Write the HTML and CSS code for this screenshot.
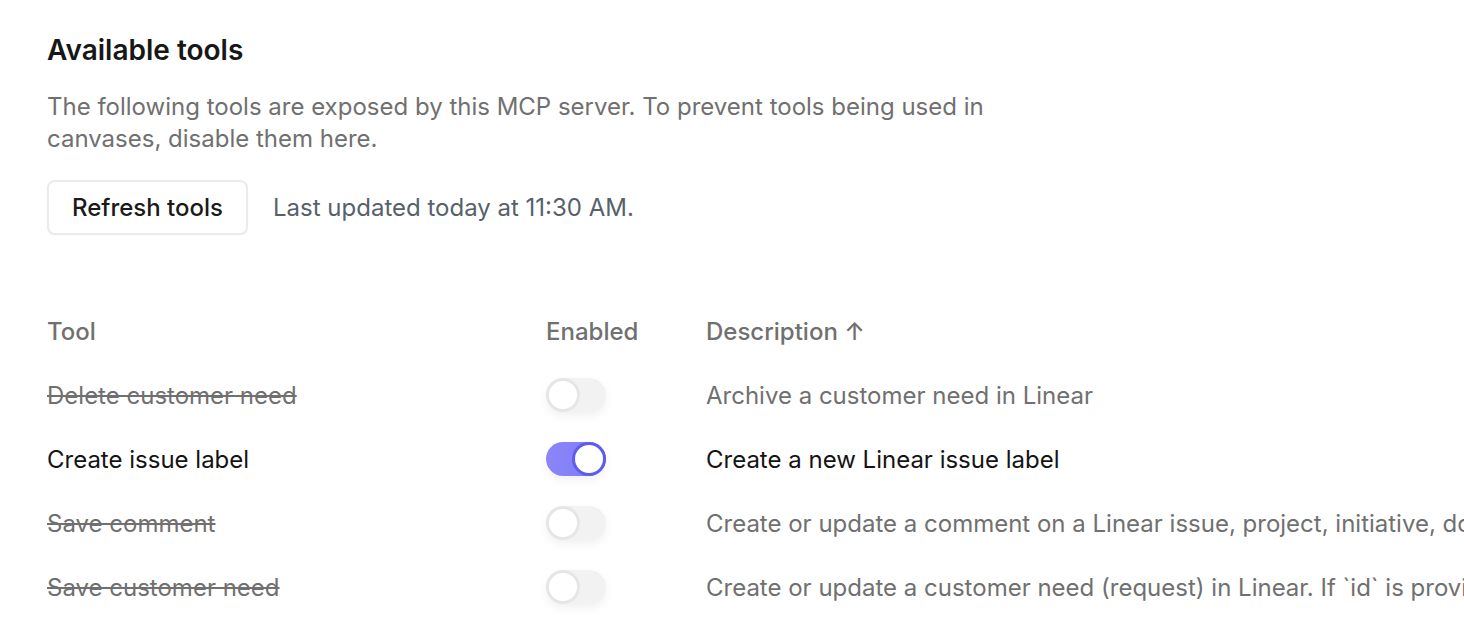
FILE: index.html
```html
<!DOCTYPE html>
<html>
<head>
<meta charset="utf-8">
<link rel="stylesheet" href="styles.css">
</head>
<body>
<main class="page">
  <h1 class="title">Available tools</h1>
  <p class="lead">The following tools are exposed by this MCP server. To prevent tools being used in canvases, disable them here.</p>
  <div class="refresh-row">
    <button class="btn">Refresh tools</button>
    <span class="updated">Last updated today at 11:30 AM.</span>
  </div>
  <div class="table">
    <div class="row head">
      <div class="c-tool">Tool</div>
      <div class="c-en">Enabled</div>
      <div class="c-desc">Description ↑</div>
    </div>
    <div class="row off">
      <div class="c-tool"><span class="name">Delete customer need</span></div>
      <div class="c-en"><span class="toggle"><span class="knob"></span></span></div>
      <div class="c-desc">Archive a customer need in Linear</div>
    </div>
    <div class="row on">
      <div class="c-tool"><span class="name">Create issue label</span></div>
      <div class="c-en"><span class="toggle"><span class="knob"></span></span></div>
      <div class="c-desc">Create a new Linear issue label</div>
    </div>
    <div class="row off">
      <div class="c-tool"><span class="name">Save comment</span></div>
      <div class="c-en"><span class="toggle"><span class="knob"></span></span></div>
      <div class="c-desc">Create or update a comment on a Linear issue, project, initiative, document, or customer need</div>
    </div>
    <div class="row off">
      <div class="c-tool"><span class="name">Save customer need</span></div>
      <div class="c-en"><span class="toggle"><span class="knob"></span></span></div>
      <div class="c-desc">Create or update a customer need (request) in Linear. If `id` is provided, updates the existing need</div>
    </div>
  </div>
</main>
</body>
</html>
```
FILE: styles.css
```css
html, body {
  margin: 0;
  padding: 0;
  background: #ffffff;
  overflow: hidden;
}
body {
  font-family: Inter, "Noto Sans", sans-serif;
  color: #1a1a1a;
  width: 1464px;
  height: 624px;
}
.page {
  padding: 34px 0 0 47px;
}
.title {
  margin: 0;
  font-size: 28px;
  font-weight: 600;
  line-height: 32px;
  color: #171717;
}
.lead {
  margin: 25px 0 0;
  width: 1000px;
  font-size: 24px;
  line-height: 32px;
  color: #707070;
}
.refresh-row {
  display: flex;
  align-items: center;
  gap: 25px;
  margin-top: 25px;
}
.btn {
  font-family: inherit;
  font-size: 24px;
  font-weight: 500;
  color: #1a1a1a;
  background: #fff;
  border: 2px solid #ebebeb;
  border-radius: 8px;
  height: 55px;
  width: 201px;
  padding: 0;
  box-shadow: 0 1px 2px rgba(0,0,0,0.03);
}
.updated {
  font-size: 24px;
  color: #56616a;
}
.table {
  margin-top: 64px;
  white-space: nowrap;
}
.row {
  display: grid;
  grid-template-columns: 499px 160px 1fr;
  height: 64px;
  align-items: center;
  font-size: 24px;
}
.row.head {
  height: 64px;
  color: #707070;
  font-weight: 500;
}
.c-desc {
  overflow: hidden;
}
.off .name {
  color: #707070;
  text-decoration: line-through;
  text-decoration-thickness: 2px;
}
.off .c-desc {
  color: #707070;
}
.on .name, .on .c-desc {
  color: #141414;
}
.toggle {
  display: flex;
  width: 60px;
  height: 34px;
  border-radius: 17px;
  background: #f2f2f2;
  align-items: center;
  box-shadow: 0 4px 10px rgba(0,0,0,0.06);
}
.knob {
  width: 28px;
  height: 28px;
  border-radius: 50%;
  background: #fff;
  border: 3px solid #e6e6e6;
}
.on .toggle {
  background: linear-gradient(90deg, #8a86f8, #7f7af8);
  justify-content: flex-end;
}
.on .knob {
  border-color: #5f5af2;
}
```
